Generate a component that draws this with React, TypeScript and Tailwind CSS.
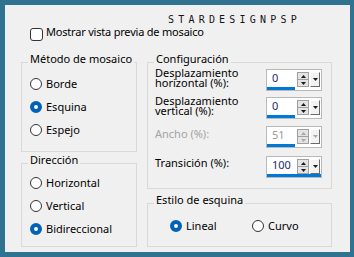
import React from "react";

function Radio({ label, checked }: { label: string; checked?: boolean }) {
  return (
    <div className="flex items-center h-[23px]">
      <span
        className={
          checked
            ? "w-[12px] h-[12px] rounded-full border-[4px] border-[#0062b9] bg-white shrink-0"
            : "w-[12px] h-[12px] rounded-full border border-[#333333] bg-white shrink-0"
        }
      />
      <span className="ml-[4px] leading-[23px] whitespace-nowrap">{label}</span>
    </div>
  );
}

function Tri({ down, color }: { down?: boolean; color: string }) {
  return (
    <svg width="5" height="3" viewBox="0 0 5 3" className="block">
      <polygon points={down ? "0,0 5,0 2.5,3" : "2.5,0 5,3 0,3"} fill={color} />
    </svg>
  );
}

function Spin({ value, bar, disabled }: { value: string; bar: string; disabled?: boolean }) {
  const arrow = disabled ? "#a8a8a8" : "#1a1a1a";
  return (
    <div className="w-[56px] h-[22px] border border-[#b9b9b9] bg-white flex flex-col shrink-0">
      <div className="h-[17px] flex items-start">
        <span
          className={`w-[30px] pl-[5px] leading-[15px] ${disabled ? "text-[#9b9b9b]" : "text-[#1c2a6e]"}`}
        >
          {value}
        </span>
        <div className="mt-[2px] w-[12px] h-[15px] border border-[#a0a0a0] bg-[#e4e4e4] flex flex-col">
          <div className="flex-1 flex items-center justify-center border-b border-[#a0a0a0]">
            <Tri color={arrow} />
          </div>
          <div className="flex-1 flex items-center justify-center">
            <Tri down color={arrow} />
          </div>
        </div>
        <div className="mt-[2px] ml-[1px] w-[10px] h-[15px] border border-t-white border-l-white border-r-[#6b6b6b] border-b-[#6b6b6b] bg-[#f2f2f2] flex items-center justify-center">
          <Tri down color={arrow} />
        </div>
      </div>
      <div className={`h-[3px] bg-[#0078d7] ${bar}`} />
    </div>
  );
}

function Group({ title, className, children }: { title: string; className: string; children: React.ReactNode }) {
  return (
    <div className={`relative border border-[#d9d9d9] ${className}`}>
      <span className="absolute -top-[11px] left-[6px] px-[2px] bg-[#f0f0f0] leading-[14px] whitespace-nowrap">
        {title}
      </span>
      {children}
    </div>
  );
}

export default function App() {
  return (
    <div className="w-[354px] h-[257px] bg-[#2f7391] pt-[5px] pl-[5px] pr-[4px] pb-[5px] font-['Noto_Sans',sans-serif] text-[11px] text-black">
      <div className="h-full bg-[#f0f0f0] flex flex-col">
        <div className="mt-[9px] pl-[163px] h-[12px] leading-[12px] font-['DejaVu_Sans_Mono',monospace] text-[10px] tracking-[4.2px] text-[#151515]">
          STARDESIGNPSP
        </div>

        <div className="mt-[-2px] ml-[25px] flex items-start">
          <span className="mt-[4px] w-[13px] h-[13px] rounded-[3px] border border-[#333333] bg-white" />
          <span className="ml-[3px] leading-[16px] tracking-[-0.2px]">Mostrar vista previa de mosaico</span>
        </div>

        <div className="mt-[21px] pl-[16px] flex gap-[10px]">
          <div className="w-[116px] flex flex-col gap-[11px]">
            <Group title="Método de mosaico" className="h-[90px] pt-[9px] pl-[8px]">
              <Radio label="Borde" />
              <Radio label="Esquina" checked />
              <Radio label="Espejo" />
            </Group>
            <Group title="Dirección" className="h-[84px] pt-[7px] pl-[8px]">
              <Radio label="Horizontal" />
              <Radio label="Vertical" />
              <Radio label="Bidireccional" checked />
            </Group>
          </div>

          <div className="w-[185px] flex flex-col gap-[14px]">
            <Group title="Configuración" className="h-[127px] pl-[7px]">
              <div className="mt-[6px] flex items-start">
                <div className="w-[111px] -mt-[1px] leading-[10px]">
                  Desplazamiento
                  <br />
                  horizontal (%):
                </div>
                <Spin value="0" bar="w-[28px]" />
              </div>
              <div className="mt-[6px] flex items-start">
                <div className="w-[111px] -mt-[1px] leading-[10px]">
                  Desplazamiento
                  <br />
                  vertical (%):
                </div>
                <Spin value="0" bar="w-[28px]" />
              </div>
              <div className="mt-[7px] flex items-start">
                <div className="w-[111px] leading-[16px] text-[#a3a3a3]">Ancho (%):</div>
                <Spin value="51" bar="w-[28px]" disabled />
              </div>
              <div className="mt-[8px] flex items-start">
                <div className="w-[111px] -mt-[1px] leading-[16px]">Transición (%):</div>
                <Spin value="100" bar="w-[54px]" />
              </div>
            </Group>
            <Group title="Estilo de esquina" className="h-[44px] pt-[10px] pl-[22px]">
              <div className="flex">
                <div className="w-[82px]">
                  <Radio label="Lineal" checked />
                </div>
                <Radio label="Curvo" />
              </div>
            </Group>
          </div>
        </div>
      </div>
    </div>
  );
}
